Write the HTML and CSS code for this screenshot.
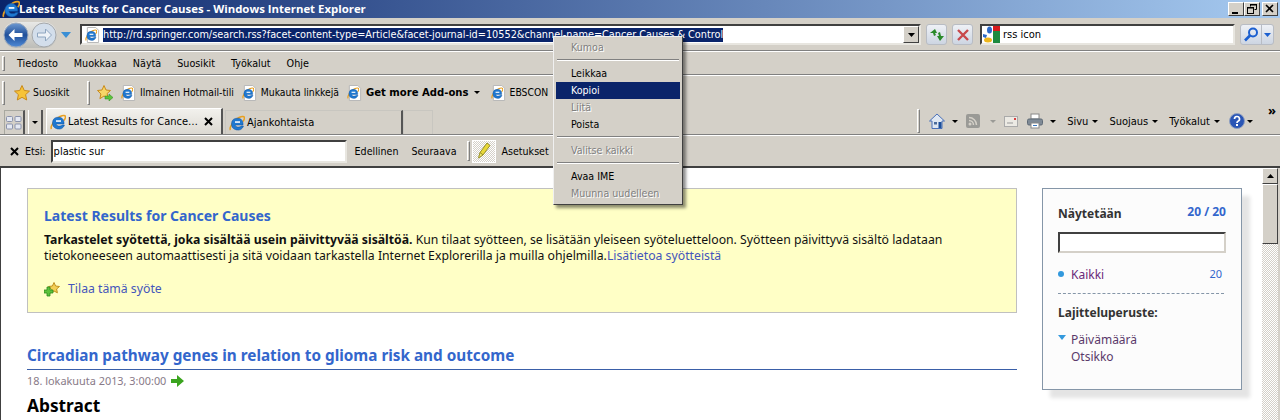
FILE: index.html
```html
<!DOCTYPE html>
<html lang="fi">
<head>
<meta charset="utf-8">
<title>Latest Results for Cancer Causes</title>
<link rel="stylesheet" href="styles.css">
</head>
<body>
<svg class="defs" width="0" height="0">
  <defs>
    <symbol id="ie" viewBox="0 0 16 16">
      <path d="M1.500 15C0 13 4 5.500 10 2.500 13 1 15.500 1 15.500 3c0 1-.5 2-1.500 3.500" fill="none" stroke="#e8a020" stroke-width="1.500"/>
      <path d="M2.500 8.500a5.800 5.800 0 0 1 11.500-.5v2H6.200c.3 2.300 4 2.800 6.300 1H14.500a6.200 6.200 0 0 1-12-2.500z" fill="#1f78d0" stroke="#0c4f9e" stroke-width=".5"/>
      <rect x="6" y="6.300" width="5" height="1.500" fill="#fff"/>
    </symbol>
    <symbol id="page" viewBox="0 0 16 17">
      <path d="M2.500.5h9l3 3v13h-12z" fill="#fff" stroke="#b5b5b5"/>
      <use href="#ie" x="0" y="2" width="13" height="13"/>
    </symbol>
  </defs>
</svg>
<div class="window">
  <header class="title">
    <svg class="title-ie" width="18" height="18"><use href="#ie"/></svg>
    <span class="title-text">Latest Results for Cancer Causes - Windows Internet Explorer</span>
    <div class="win-btns">
      <span class="win-btn"><svg width="14" height="12"><rect x="3" y="9" width="6" height="2" fill="#000"/></svg></span>
      <span class="win-btn"><svg width="14" height="12"><path d="M5.500 1.500h6v5h-2M5.500 1.500v2" fill="none" stroke="#000"/><rect x="5" y="1" width="7" height="1.500"/><rect x="2.500" y="4.500" width="6" height="6" fill="none" stroke="#000"/><rect x="2" y="4" width="7" height="1.500"/></svg></span>
      <span class="win-btn win-close"><svg width="14" height="12"><path d="M3 2l7 7M10 2l-7 7" stroke="#000" stroke-width="1.600"/></svg></span>
    </div>
  </header>

  <div class="row addr-row">
    <div class="nav-pill">
      <svg class="nav-btn" width="26" height="26" viewBox="0 0 26 26">
        <defs><linearGradient id="gb" x1="0" y1="0" x2="0" y2="1"><stop offset="0" stop-color="#6f9ad2"/><stop offset=".5" stop-color="#1f4f9a"/><stop offset="1" stop-color="#4f8ad6"/></linearGradient></defs>
        <circle cx="13" cy="13" r="12" fill="url(#gb)" stroke="#9aa9bd"/>
        <path d="M5.500 13l6-6v4h8v4h-8v4z" fill="#fff"/>
      </svg>
      <svg class="nav-btn nav-fwd" width="26" height="26" viewBox="0 0 26 26">
        <circle cx="13" cy="13" r="12" fill="#d3deeb" stroke="#a5a8ab"/>
        <path d="M20.500 13l-6-6v4h-8v4h8v4z" fill="#eef2f7" stroke="#8fa6c0"/>
      </svg>
    </div>
    <svg class="nav-drop" width="10" height="6"><path d="M0 0h10L5 6z" fill="#3a8fd5"/></svg>
    <div class="addr-box">
      <svg class="addr-ie" width="15" height="16"><use href="#page"/></svg>
      <span class="addr-url">http://rd.springer.com/search.rss?facet-content-type=Article&amp;facet-journal-id=10552&amp;channel-name=Cancer Causes &amp; Control</span>
      <span class="combo"><svg width="7" height="4"><path d="M0 0h7L3.500 4z"/></svg></span>
    </div>
    <span class="tool-btn"><svg width="16" height="14" viewBox="0 0 16 14"><path d="M6 1L1 5h3l1 3 2-1-1-2h2zM11 13l4-5h-3l-1-4-2 1 1 3H8z" fill="#2a8a2a"/></svg></span>
    <span class="tool-btn"><svg width="14" height="14" viewBox="0 0 14 14"><path d="M2 2l10 10M12 2L2 12" stroke="#c8484c" stroke-width="2.400"/></svg></span>
    <div class="search-box">
      <svg width="17" height="17" viewBox="0 0 17 17"><rect x="10" y="0" width="7" height="6" fill="#d8191c"/><rect x="10" y="5" width="7" height="12" fill="#1d8a3f"/><ellipse cx="6.500" cy="4" rx="2.500" ry="3.500" fill="#2a68c8"/><path d="M0 8l4 1-1 3-3-1z" fill="#2a68c8"/><ellipse cx="5" cy="14" rx="4" ry="2.500" fill="#edb51a"/></svg>
      <span>rss icon</span>
    </div>
    <span class="go-btn">
      <span class="go-main"><svg width="16" height="15" viewBox="0 0 16 15"><circle cx="10" cy="5.500" r="4" fill="none" stroke="#1b5fd0" stroke-width="2"/><path d="M7 8.500L2 13.500" stroke="#1b5fd0" stroke-width="2.600"/></svg></span>
      <span class="go-drop"><svg width="7" height="4"><path d="M0 0h7L3.500 4z" fill="#1b5fd0"/></svg></span>
    </span>
  </div>

  <nav class="row menu-row">
    <span class="grip"></span>
    <span>Tiedosto</span><span>Muokkaa</span><span>Näytä</span><span>Suosikit</span><span>Työkalut</span><span>Ohje</span>
  </nav>

  <div class="row fav-row">
    <span class="grip"></span>
    <span class="fav-main">
      <svg width="16" height="16" viewBox="0 0 16 16"><path d="M8 .5l2.300 5 5.200.6-3.900 3.500 1.100 5.400L8 12.300 3.300 15l1.100-5.400L.5 6.100l5.200-.6z" fill="#f6c338" stroke="#c98a1a"/></svg>
      Suosikit
    </span>
    <span class="vsep fav-sep"></span>
    <svg class="fav-add" width="16" height="16" viewBox="0 0 16 16"><path d="M7 .5l2 4.500 4.500.5-3.400 3 1 4.700L7 11l-4.100 2.700 1-4.700L.5 5.500 5 5z" fill="#f6d668" stroke="#c98a1a"/><path d="M8 11h4V9l4 3.500-4 3.500v-2H8z" fill="#5cc23c" stroke="#2b8a1c" stroke-width=".5"/></svg>
    <span class="link"><svg width="15" height="16"><use href="#page"/></svg>Ilmainen Hotmail-tili</span>
    <span class="link"><svg width="15" height="16"><use href="#page"/></svg>Mukauta linkkejä</span>
    <span class="link link-bold"><svg width="15" height="16"><use href="#page"/></svg><b>Get more Add-ons</b><i class="caret"></i></span>
    <span class="link"><svg width="15" height="16"><use href="#page"/></svg>EBSCON</span>
  </div>

  <div class="row tab-row">
    <span class="tab-quick"><svg width="16" height="14" viewBox="0 0 16 14"><g fill="#e4e8f2" stroke="#8a92ac"><rect x=".5" y=".5" width="6" height="5" rx="1"/><rect x="9" y=".5" width="6" height="5" rx="1"/><rect x=".5" y="8" width="6" height="5" rx="1"/><rect x="9" y="8" width="6" height="5" rx="1"/></g></svg></span>
    <span class="tab-list"><i class="caret"></i></span>
    <div class="tab tab-active">
      <svg width="16" height="16"><use href="#ie"/></svg>
      <span class="tab-label">Latest Results for Cance…</span>
      <svg class="tab-x" width="9" height="9"><path d="M1 1l7 7M8 1L1 8" stroke="#000" stroke-width="2"/></svg>
    </div>
    <div class="tab">
      <svg width="16" height="16"><use href="#ie"/></svg>
      <span class="tab-label">Ajankohtaista</span>
    </div>
    <div class="tab tab-new"></div>
    <div class="cmd">
      <span class="vsep cmd-sep"></span>
      <svg class="cmd-home" width="16" height="16" viewBox="0 0 16 16"><path d="M8 1L.5 8H3v7.500h10V8h2.500z" fill="#dfe7f2" stroke="#4a70b8"/><rect x="9.500" y="9" width="3" height="6" fill="#1d4f9a"/><rect x="5" y="9" width="3" height="2.500" fill="#4a6a9a"/></svg>
      <i class="caret"></i>
      <svg class="cmd-rss" width="14" height="14" viewBox="0 0 14 14"><rect width="14" height="14" rx="2" fill="#9a9a96"/><circle cx="4" cy="10" r="1.500" fill="#d4d0c8"/><path d="M3 6.500a4.500 4.500 0 0 1 4.500 4.500M3 3.500A7.500 7.500 0 0 1 10.500 11" fill="none" stroke="#d4d0c8" stroke-width="1.500"/></svg>
      <i class="caret caret-dim"></i>
      <svg class="cmd-mail" width="14" height="11" viewBox="0 0 14 11"><rect x=".5" y=".5" width="13" height="10" fill="#eceae4" stroke="#aaa"/><rect x="10" y="2" width="2" height="2" fill="#d84040"/><path d="M3 7h6" stroke="#999"/></svg>
      <svg class="cmd-print" width="16" height="16" viewBox="0 0 16 16"><rect x="4" y="1" width="8" height="5" fill="#fff" stroke="#888"/><rect x=".5" y="6" width="15" height="6" rx="1.500" fill="#7f8a96" stroke="#5f6a76"/><rect x="4" y="10" width="8" height="5" fill="#fff" stroke="#888"/><rect x="6" y="12" width="4" height="1" fill="#3a78c0"/></svg>
      <i class="caret"></i>
      <span class="cmd-text">Sivu<i class="caret"></i></span>
      <span class="cmd-text">Suojaus<i class="caret"></i></span>
      <span class="cmd-text">Työkalut<i class="caret"></i></span>
      <svg class="cmd-help" width="16" height="16" viewBox="0 0 16 16"><circle cx="8" cy="8" r="7.500" fill="#2a55b5" stroke="#8f9fc0"/><path d="M5.500 6a2.500 2.500 0 1 1 3.500 2.300c-.7.400-1 .8-1 1.700" fill="none" stroke="#fff" stroke-width="1.700"/><rect x="7" y="11" width="2" height="2" fill="#fff"/></svg>
      <i class="caret"></i>
      <span class="cmd-more">»</span>
    </div>
  </div>

  <div class="row find-row">
    <svg class="find-x" width="9" height="9"><path d="M1 1l7 7M8 1L1 8" stroke="#000" stroke-width="2"/></svg>
    <span class="find-label">Etsi:</span>
    <span class="find-input">plastic sur</span>
    <span class="find-prev">Edellinen</span>
    <span class="find-next">Seuraava</span>
    <span class="vsep find-sep"></span>
    <span class="find-pen"><svg width="16" height="18" viewBox="0 0 16 18"><path d="M11 1l3 2.500-7 9.500-3-2.500z" fill="#e8d838" stroke="#98902a"/><path d="M4 10.500L2.500 16 7 13z" fill="#f0e860" stroke="#98902a"/></svg></span>
    <span class="find-opt">Asetukset</span>
  </div>

  <div class="viewport">
    <main class="page">
      <div class="feed-col">
        <section class="notice">
          <h1 class="notice-title">Latest Results for Cancer Causes</h1>
          <p class="notice-text"><b>Tarkastelet syötettä, joka sisältää usein päivittyvää sisältöä.</b> Kun tilaat syötteen, se lisätään yleiseen syöteluetteloon. Syötteen päivittyvä sisältö ladataan tietokoneeseen automaattisesti ja sitä voidaan tarkastella Internet Explorerilla ja muilla ohjelmilla.<a>Lisätietoa syötteistä</a></p>
          <div class="subscribe">
            <svg width="16" height="15" viewBox="0 0 16 15"><path d="M10 .5l1.600 3.500 3.900.5-2.900 2.500.8 3.800L10 9l-3.400 2 .8-3.800L4.500 4.500 8.400 4z" fill="#f3cf55" stroke="#c09020"/><path d="M3 5h3v3h3v3H6v3H3v-3H0V8h3z" fill="#5cc23c" stroke="#2b8a1c" stroke-width=".8"/></svg>
            <a>Tilaa tämä syöte</a>
          </div>
        </section>
        <article class="entry">
          <h2 class="entry-title">Circadian pathway genes in relation to glioma risk and outcome</h2>
          <div class="entry-date">18. lokakuuta 2013, 3:00:00
            <svg width="13" height="12" viewBox="0 0 13 12"><path d="M0 4h6V0l7 6-7 6V8H0z" fill="#3ba41f"/></svg>
          </div>
          <h3 class="entry-sub">Abstract</h3>
        </article>
      </div>
      <aside class="side">
        <div class="side-head"><b>Näytetään</b><span>20 / 20</span></div>
        <div class="side-input"></div>
        <div class="side-all"><i class="dot"></i><span>Kaikki</span><em>20</em></div>
        <h4 class="side-sort">Lajitteluperuste:</h4>
        <div class="sort-item"><i class="tri"></i><span>Päivämäärä</span></div>
        <div class="sort-item"><span>Otsikko</span></div>
      </aside>
    </main>
    <div class="scrollbar">
      <span class="sb-btn"><svg width="7" height="4"><path d="M3.500 0L7 4H0z"/></svg></span>
      <span class="sb-thumb"></span>
    </div>
  </div>

  <div class="ctx">
    <div class="ctx-item off">Kumoa</div>
    <hr>
    <div class="ctx-item">Leikkaa</div>
    <div class="ctx-item on">Kopioi</div>
    <div class="ctx-item off">Liitä</div>
    <div class="ctx-item">Poista</div>
    <hr>
    <div class="ctx-item off">Valitse kaikki</div>
    <hr>
    <div class="ctx-item">Avaa IME</div>
    <div class="ctx-item off">Muunna uudelleen</div>
  </div>
</div>
</body>
</html>
```
FILE: styles.css
```css
* { box-sizing: border-box; }
html, body { margin: 0; padding: 0; overflow: hidden; }
body { width: 1280px; height: 420px; font: 11px/13px "DejaVu Sans Condensed", "Noto Sans", sans-serif; color: #000; }
.defs { position: absolute; }
svg { display: block; flex: none; }
i, em { font-style: normal; }
h1, h2, h3, h4, p { margin: 0; }

.window { position: relative; width: 1280px; height: 420px; background: #d4d0c8; display: flex; flex-direction: column; overflow: hidden; }

.title { height: 18px; flex: none; display: flex; align-items: center; padding: 0 2px; background: linear-gradient(90deg, #0a246a, #a6caf0); color: #fff; font: bold 11.400px/18px "Open Sans", sans-serif; }
.title-text { margin-left: -1px; }
.win-btns { margin-left: auto; display: flex; }
.win-btn { width: 16px; height: 14px; background: #d4d0c8; border: 1px solid; border-color: #fff #404040 #404040 #fff; display: flex; align-items: center; justify-content: center; }
.win-close { margin-left: 2px; }

.row { display: flex; align-items: center; flex: none; }
.addr-row { height: 34px; padding-left: 3px; border-bottom: 1px solid #fff; box-shadow: inset 0 -1px 0 #808080; }
.nav-pill { display: flex; gap: 2px; background: linear-gradient(#e8e8e6, #bdbdb8); border-radius: 13px; }
.nav-drop { margin-left: 4px; }
.addr-box { width: 841px; height: 21px; margin-left: 9px; background: #fff; border: 2px solid; border-color: #404040 #e8e6e0 #e8e6e0 #404040; display: flex; align-items: center; position: relative; padding-left: 3px; }
.addr-url { margin: 1px 0 0 3px; background: #0a246a; color: #fff; white-space: nowrap; font-size: 10.800px; line-height: 14px; }
.combo { position: absolute; right: 0; top: 0; width: 16px; height: 17px; background: #d4d0c8; border: 1px solid; border-color: #fff #404040 #404040 #fff; display: flex; align-items: center; justify-content: center; }
.tool-btn { width: 21px; height: 21px; margin-left: 5px; border: 1px solid #b8bcc4; border-radius: 3px; background: linear-gradient(#eef1f6, #cdd5e2); display: flex; align-items: center; justify-content: center; }
.search-box { width: 255px; height: 21px; margin-left: 7px; background: #fff; border: 2px solid; border-color: #404040 #e8e6e0 #e8e6e0 #404040; display: flex; align-items: center; gap: 3px; padding-left: 1px; }
.go-btn { margin-left: 5px; width: 34px; height: 21px; display: flex; border: 1px solid #b8bcc4; border-radius: 3px; background: linear-gradient(#eef1f6, #cdd5e2); }
.go-main { width: 21px; display: flex; align-items: center; justify-content: center; border-right: 1px solid #b8bcc4; }
.go-drop { flex: 1; display: flex; align-items: center; justify-content: center; }

.grip { width: 3px; border: 1px solid; border-color: #fff #808080 #808080 #fff; margin-left: 2px; flex: none; }
.menu-row { height: 23px; gap: 16px; border-bottom: 1px solid #808080; font-size: 10.700px; }
.menu-row .grip { height: 15px; margin-right: -4px; }
.fav-row { height: 33px; border-top: 1px solid #fff; padding-top: 1px; font-size: 10.300px; }
.fav-row .grip { height: 24px; }
.fav-row b { font-size: 11.200px; }
.fav-main { display: flex; align-items: center; gap: 3px; margin-left: 9px; width: 73px; }
.vsep { width: 3px; border: 1px solid; border-color: #fff #808080 #808080 #fff; flex: none; }
.fav-sep { height: 24px; }
.fav-add { margin-left: 7px; margin-right: 8px; }
.link { display: flex; align-items: center; gap: 4px; margin-right: 8px; white-space: nowrap; }
.link-bold { margin-right: 11px; }
.caret { width: 0; height: 0; border: 3px solid transparent; border-top: 3px solid #000; border-bottom: 0; display: inline-block; flex: none; }
.caret-dim { border-top-color: #9a9a96; }
.link-bold .caret { margin-left: 1px; }

.tab-row { height: 27px; align-items: flex-end; padding-left: 4px; border-bottom: 1px solid #808080; }
.tab-quick { width: 21px; height: 24px; border: 1px solid #a8a8a0; border-width: 1px 2px 0 1px; border-right-color: #555; display: flex; align-items: center; justify-content: center; }
.tab-list { width: 15px; height: 24px; margin-left: 3px; border-right: 2px solid #555; border-left: 1px solid #fff; display: flex; align-items: center; justify-content: center; }
.tab { width: 178px; height: 24px; border: 1px solid #c8c6c0; border-right: 2px solid #555; border-bottom: 0; display: flex; align-items: center; gap: 2px; padding-left: 3px; white-space: nowrap; }
.tab-active { height: 26px; margin-left: 3px; background: linear-gradient(#f2f1ed, #dcd9d2); border-color: #fff; border-right-color: #555; width: 177px; }
.tab + .tab:not(.tab-active) { margin-left: 2px; }
.tab-x { margin-left: auto; margin-right: 8px; }
.tab-new { width: 30px; margin-left: 0 !important; padding: 0; border-right: 1px solid #c8c6c0; }
.cmd { display: flex; align-items: center; margin-left: auto; height: 26px; padding-right: 27px; position: relative; }
.cmd-sep { height: 24px; margin-right: 9px; }
.cmd-home + .caret { margin-left: 7px; }
.cmd-rss { margin-left: 8px; }
.cmd-rss + .caret { margin-left: 10px; }
.cmd-mail { margin-left: 8px; }
.cmd-print { margin-left: 9px; }
.cmd-print + .caret { margin-left: 7px; }
.cmd-text { display: flex; align-items: center; gap: 4px; margin-left: 11px; }
.cmd-help { margin-left: 9px; }
.cmd-help + .caret { margin-left: 2px; }
.cmd-more { position: absolute; right: 4px; top: -4px; font: bold 13px/13px "Open Sans", sans-serif; }

.find-row { height: 31px; padding-left: 10px; border-top: 1px solid #fff; font-size: 10.600px; }
.find-label { margin-left: 6px; }
.find-input { width: 296px; height: 23px; margin-left: 5px; background: #fff; border: 2px solid; border-color: #404040 #e8e6e0 #e8e6e0 #404040; font-size: 11px; line-height: 19px; padding-left: 1px; }
.find-prev { margin-left: 8px; }
.find-next { margin-left: 13px; }
.find-sep { height: 20px; margin-left: 11px; }
.find-pen { width: 24px; height: 23px; margin-left: 2px; border: 1px solid #fff; background: repeating-conic-gradient(#d4d0c8 0 25%, #fff 0 50%) 0 0 / 2px 2px; display: flex; align-items: center; justify-content: center; }
.find-opt { margin-left: 5px; }

.viewport { flex: 1; min-height: 0; display: flex; border-top: 2px solid #404040; border-left: 1px solid #404040; padding-right: 2px; overflow: hidden; }
.page { width: 1261px; background: #fff; display: flex; align-items: flex-start; padding: 20px 0 0 26px; gap: 25px; overflow: hidden; font-family: "Noto Sans", sans-serif; }
.feed-col { width: 990px; flex: none; }
.notice { height: 125px; background: #ffffc6; border: 1px solid #c0c0c0; padding: 17px 16px 0; font-size: 12.250px; line-height: 16px; color: #111; }
.notice-title { font-size: 14px; line-height: 20px; color: #3366cc; font-weight: bold; }
.notice-text { margin-top: 6px; width: 940px; }
.notice-text a { color: #4455bb; }
.subscribe { display: flex; align-items: center; gap: 8px; margin-top: 17px; color: #4455bb; }
.entry { margin-top: 31px; }
.entry-title { font-size: 15.300px; line-height: 22px; font-weight: bold; color: #3366cc; padding-bottom: 3px; border-bottom: 1px solid #3a5fa8; }
.entry-date { margin-top: 3px; font-size: 10.900px; line-height: 15px; color: #887a88; display: flex; align-items: center; gap: 5px; }
.entry-sub { margin-top: 6px; font-size: 17.300px; line-height: 24px; }

.side { width: 200px; height: 202px; flex: none; background: #fcfcfc; border: 1px solid #8596a8; box-shadow: 8px 8px 4px #e4e4e4; padding: 16px 15px 0; font-size: 12px; line-height: 16px; color: #333; }
.side-head { display: flex; justify-content: space-between; margin-top: 1px; }
.side-head span { color: #3366cc; font-weight: bold; margin-top: -2px; }
.side-input { height: 21px; margin-top: 10px; width: 168px; background: #fff; border: 2px solid; border-color: #404040 #d4d0c8 #d4d0c8 #404040; }
.side-all { display: flex; align-items: center; margin-top: 12px; padding-bottom: 8px; border-bottom: 1px dashed #8596a8; color: #6a2a7a; width: 166px; height: 29px; }
.dot { width: 6px; height: 6px; border-radius: 50%; background: #3399dd; margin-right: 7px; margin-top: -2px; }
.side-all em { margin-left: auto; margin-right: 2px; margin-top: -3px; color: #3366cc; font-size: 11px; }
.side-sort { margin-top: 11px; font-size: 12px; line-height: 16px; }
.sort-item { display: flex; align-items: center; color: #5a3a6a; line-height: 17px; padding-left: 13px; position: relative; }
.side-sort + .sort-item { margin-top: 10px; }
.tri { position: absolute; left: 0; top: 4px; width: 0; height: 0; border: 4px solid transparent; border-top: 5px solid #3399dd; border-bottom: 0; }

.scrollbar { width: 16px; flex: none; display: flex; flex-direction: column; background: repeating-conic-gradient(#d4d0c8 0 25%, #fff 0 50%) 0 0 / 2px 2px; }
.sb-btn { height: 16px; background: #d4d0c8; border: 1px solid; border-color: #fff #404040 #404040 #fff; display: flex; align-items: center; justify-content: center; }
.sb-thumb { height: 60px; background: #d4d0c8; border: 1px solid; border-color: #fff #404040 #404040 #fff; }

.ctx { position: absolute; left: 553px; top: 36px; width: 130px; height: 169px; background: #d4d0c8; border: 1px solid; border-color: #f0f0f0 #404040 #404040 #f0f0f0; box-shadow: 3px 3px 3px rgba(0,0,0,.45); padding: 2px; font-size: 10.600px; }
.ctx-item { height: 17px; line-height: 17px; padding-left: 15px; white-space: nowrap; }
.ctx-item.off { color: #808080; text-shadow: 1px 1px 0 #fff; }
.ctx-item.on { background: #0a246a; color: #fff; }
.ctx hr { height: 2px; margin: 3px 1px 4px; border: 0; border-top: 1px solid #808080; border-bottom: 1px solid #fff; }
```
